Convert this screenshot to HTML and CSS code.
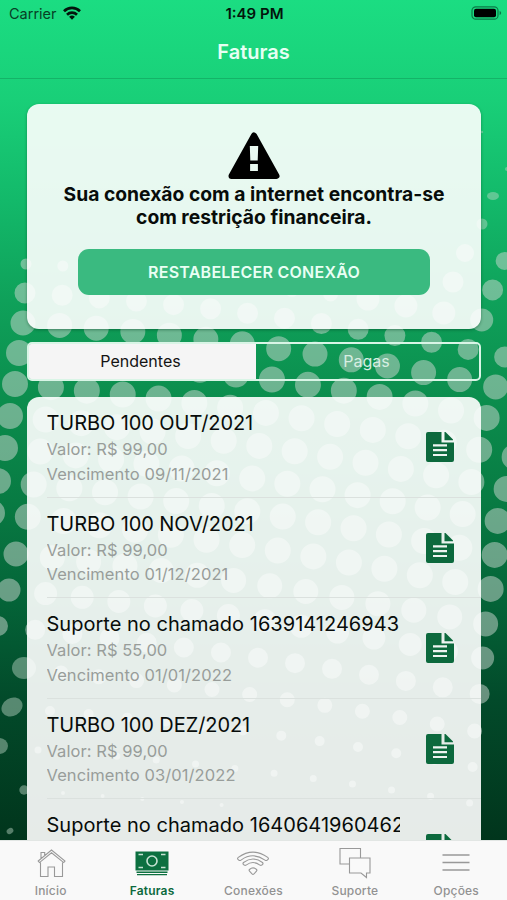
FILE: index.html
```html
<!DOCTYPE html>
<html lang="pt-BR">
<head>
<meta charset="utf-8">
<title>Faturas</title>
<link rel="stylesheet" href="styles.css">
</head>
<body>
<div class="phone">
  <!-- halftone backdrop: each row of dots is one zero-length dashed stroke -->
  <svg class="backdrop" viewBox="0 0 507 900" aria-hidden="true">
    <g class="dots">
      <path d="M453 282L493 290" pathLength="1.01" stroke-width="21"/>
      <path d="M465 253L505 261" pathLength="1.01" stroke-width="18"/>
      <path d="M26 264L100 268" pathLength="2.01" stroke-width="11"/>
      <path d="M137 271L331 294" pathLength="5.01" stroke-width="15"/>
      <path d="M368 299L520 327" pathLength="4.01" stroke-width="23"/>
      <path d="M25 293Q265 306 505 357" pathLength="13.01" stroke-width="21"/>
      <path d="M23 323Q259 337 496 387" pathLength="13.01" stroke-width="25"/>
      <path d="M19 353Q253 368 487 418" pathLength="13.01" stroke-width="26"/>
      <path d="M15 384Q265 405 515 457" pathLength="14.01" stroke-width="26"/>
      <path d="M10 416Q258 439 507 489" pathLength="14.01" stroke-width="26"/>
      <path d="M5 448Q251 472 498 521" pathLength="14.01" stroke-width="26"/>
      <path d="M-2 481Q246 504 495 555" pathLength="14.01" stroke-width="26"/>
      <path d="M-8 513Q242 539 491 589" pathLength="14.01" stroke-width="26"/>
      <path d="M16 554Q251 577 486 624" pathLength="13.01" stroke-width="25"/>
      <path d="M9 590Q246 612 483 658" pathLength="13.01" stroke-width="23"/>
      <path d="M-2 626Q239 650 480 694" pathLength="13.01" stroke-width="20"/>
      <path d="M61 673Q268 692 475 731" pathLength="11.01" stroke-width="15"/>
      <path d="M50 711Q262 727 473 767" pathLength="11.01" stroke-width="10"/>
      <path d="M38 750Q254 765 470 803" pathLength="11.01" stroke-width="7"/>
      <path d="M63 793L222 805" pathLength="4.01" stroke-width="4"/>
    </g>
    <g class="spots">
      <circle cx="482" cy="132" r="1.2"/><circle cx="507" cy="169" r="2"/>
      <ellipse cx="493" cy="196" rx="6" ry="4"/><circle cx="482" cy="224" r="5.5"/>
      <ellipse cx="24" cy="668" rx="12" ry="11"/>
      <ellipse cx="12" cy="707" rx="11" ry="9" transform="rotate(-30 12 707)"/>
      <ellipse cx="-1" cy="746" rx="9" ry="8"/><circle cx="24" cy="790" r="4.7"/>
      <ellipse cx="10" cy="831" rx="3.6" ry="2.8" transform="rotate(-35 10 831)"/>
    </g>
  </svg>

  <header class="topbar">
    <div class="status">
      <div class="carrier"><span>Carrier</span>
        <svg width="18" height="14" viewBox="0 0 18 14"><g fill="none" stroke="#03150c" stroke-width="2.7"><path d="M1 5.2a11.5 11.5 0 0 1 16 0"/><path d="M4 8.7a7.2 7.2 0 0 1 10 0"/></g><path d="M6.1 10.8a4.2 4.2 0 0 1 5.8 0L9 13.8z" fill="#03150c"/></svg>
      </div>
      <div class="clock">1:49 PM</div>
      <svg class="battery" width="31" height="14" viewBox="0 0 31 14"><rect x="1" y=".8" width="26" height="12.4" rx="3.8" fill="none" stroke="#0b7b48" stroke-width="1.2"/><rect x="3" y="2.8" width="22" height="8.4" rx="2" fill="#000"/><path d="M28.6 5v4q1.6-.7 1.6-2t-1.6-2" fill="#0b7b48"/></svg>
    </div>
    <h1>Faturas</h1>
  </header>

  <main>
    <section class="notice">
      <svg width="54" height="50" viewBox="0 0 54 50"><path d="M27 5.500L49.500 46H4.500z" fill="#000" stroke="#000" stroke-width="6" stroke-linejoin="round"/><path d="M22.800 16h8.400l-.5 14.500h-7.400zM23.100 34h7.800v7h-7.800z" fill="#e9f9f1"/></svg>
      <p>Sua conexão com a internet encontra-se<br>com restrição financeira.</p>
      <button>RESTABELECER CONEXÃO</button>
    </section>

    <nav class="segments"><span class="on">Pendentes</span><span>Pagas</span></nav>

    <svg class="defs" width="0" height="0"><symbol id="doc" viewBox="0 0 28 30"><path d="M2 0H15.500V10.500H28V28q0 2-2 2H2q-2 0-2-2V2Q0 0 2 0z" fill="#0c693d"/><path d="M18.500 0h1l7.500 7.500v.8h-8.500z" fill="#0c693d"/><path d="M7 13.300h14M7 18.200h14M7 23h14" stroke="#edf5f1" stroke-width="2.200"/></symbol></svg>

    <section class="list">
      <article><div class="info"><h2>TURBO 100 OUT/2021</h2><p>Valor: R$ 99,00</p><p class="due">Vencimento 09/11/2021</p></div><svg class="doc"><use href="#doc"/></svg></article>
      <article><div class="info"><h2>TURBO 100 NOV/2021</h2><p>Valor: R$ 99,00</p><p class="due">Vencimento 01/12/2021</p></div><svg class="doc"><use href="#doc"/></svg></article>
      <article><div class="info"><h2 class="support">Suporte no chamado 1639141246943</h2><p>Valor: R$ 55,00</p><p class="due">Vencimento 01/01/2022</p></div><svg class="doc"><use href="#doc"/></svg></article>
      <article><div class="info"><h2>TURBO 100 DEZ/2021</h2><p>Valor: R$ 99,00</p><p class="due">Vencimento 03/01/2022</p></div><svg class="doc"><use href="#doc"/></svg></article>
      <article><div class="info"><h2 class="support">Suporte no chamado 1640641960462</h2></div><svg class="doc"><use href="#doc"/></svg></article>
    </section>
  </main>

  <footer class="tabs">
    <a><svg width="36" height="34" viewBox="0 0 36 34"><path d="M8 11.500V5.500h3.700v3M5.200 14L18.500 3 32 14l-1.300 1.600L18.500 5.800 6.500 15.600zM7.500 15.500v14H15V20h6.500v9.500h8v-14"/></svg><span>Início</span></a>
    <a class="active"><svg width="36" height="34" viewBox="0 0 36 34"><path class="solid" d="M1.500 4.500h33v19h-33zM2.500 24.500h31v1.500h-31zM3 27h30v1.200H3z"/><g class="pale"><circle cx="18" cy="14" r="5"/><path d="M4.500 7.500h4.500M27 7.500h4.500M4.500 20.500h4.500M27 20.500h4.500"/></g></svg><span>Faturas</span></a>
    <a><svg width="36" height="34" viewBox="0 0 36 34"><path d="M3 12.400q-1-1 .3-2Q18-.2 32.700 10.400q1.300 1 .3 2l-1 .8q-1 .7-2-.1Q18 4.500 6 13.100q-1 .8-2 .1zM8.500 17.500q-1-1 0-2Q18 8.500 27.500 15.500q1 1 0 2l-.8.6q-.8.6-1.800 0Q18 13 11.100 18.100q-1 .6-1.800 0zM14.500 22.500q3.500-3.300 7 0 .8.8 0 1.700l-2.500 2.700q-1 .9-2 0l-2.500-2.700q-.8-.9 0-1.700z"/></svg><span>Conexões</span></a>
    <a><svg width="36" height="34" viewBox="0 0 36 34"><path d="M12.500 17H3V1.500h20.500V11M12.500 11H33v15h-3.500v4.500L24 26H12.500z"/></svg><span>Suporte</span></a>
    <a><svg width="36" height="34" viewBox="0 0 36 34"><path stroke-width="1.500" d="M4.500 8h27M4.500 15.500h27M4.500 23h27"/></svg><span>Opções</span></a>
  </footer>
</div>
</body>
</html>
```

FILE: styles.css
```css
* { box-sizing: border-box; }
body { margin: 0; font-family: Inter, "Liberation Sans", sans-serif; color: #080c0a; }
h1, h2, p { margin: 0; }
.phone {
  position: relative; width: 507px; height: 900px; overflow: hidden;
  display: flex; flex-direction: column;
  background: linear-gradient(#1bdd82 0, #19cf78 100px, #13b96a 200px, #0fa15a 300px, #0b8d4d 400px, #087b43 500px, #046438 600px, #024a2a 700px, #01351c 840px);
}
.backdrop { position: absolute; left: 0; top: 0; width: 507px; height: 900px; }
.dots path { fill: none; stroke: rgba(205, 215, 209, .5); stroke-linecap: round; stroke-dasharray: 0 1; }
.spots { fill: rgba(190, 215, 200, .45); }
.topbar { position: relative; height: 79px; border-bottom: 1px solid #14b368; }
.status { height: 28px; display: grid; grid-template-columns: 1fr auto 1fr; align-items: center; padding: 0 5px 0 9px; }
.carrier { display: flex; align-items: center; gap: 6px; font-size: 14.5px; color: #074025; }
.carrier span { margin-top: -1px; }
.carrier svg { margin-top: -3px; }
.clock { margin: -1px 2px 0 0; font-size: 15px; font-weight: 600; color: #03150c; }
.battery { justify-self: end; margin-top: -2px; }
h1 { margin-top: 11px; text-align: center; font-size: 20px; line-height: 26px; font-weight: 600; color: #e7fff3; }
main { position: relative; flex: 1; min-height: 0; overflow: hidden; padding: 25px 26px 0 27px; display: flex; flex-direction: column; }
.notice {
  flex: none; height: 225px; border-radius: 12px; padding-top: 26px;
  background: rgba(255, 255, 255, .9); box-shadow: 0 1px 3px rgba(0, 60, 30, .45);
  display: flex; flex-direction: column; align-items: center;
}
.notice > svg { flex: none; }
.notice p { margin-top: 3px; text-align: center; font-size: 19.3px; line-height: 23px; font-weight: 700; white-space: nowrap; }
.notice button {
  margin-top: 20px; width: 352px; height: 46px; border: 0; border-radius: 11px;
  background: #3aba80; color: #e9fff4; font: 600 16px Inter, sans-serif; letter-spacing: .25px;
}
.segments {
  flex: none; height: 39px; margin-top: 13px; display: grid; grid-template-columns: 1fr 1fr;
  border: 2px solid #d9f5e6; border-radius: 5px; overflow: hidden; font-size: 16px; line-height: 34px; text-align: center; color: #d8eee2;
}
.segments .on { background: #f5f5f5; color: #131313; box-shadow: 0 0 0 2px #f5f5f5; padding-right: 2px; }
.list { flex: none; margin-top: 16px; border-radius: 12px; background: rgba(255, 255, 255, .9); overflow: hidden; }
article { height: 100.5px; padding: 12px 27px 0 19.5px; display: flex; justify-content: space-between; background: linear-gradient(#dbe1de, #dbe1de) 20px 100% / 100% 1px no-repeat; }
.info { width: 353px; overflow: hidden; white-space: nowrap; }
h2 { font-size: 20px; line-height: 28px; font-weight: 400; letter-spacing: -.08px; }
h2.support { letter-spacing: .02px; }
.info p { font-size: 16.5px; line-height: 24.5px; color: #989d9a; letter-spacing: .06px; }
.info .due { letter-spacing: .09px; }
.doc { width: 28px; height: 30px; margin-top: 23px; flex: none; }
.defs { position: absolute; }
.tabs { position: relative; height: 60px; background: #f9f9f9; border-top: 1px solid #e2e6e4; display: grid; grid-template-columns: repeat(5, 1fr); }
.tabs a { display: flex; flex-direction: column; align-items: center; padding-top: 6px; font-size: 12px; line-height: 15px; font-weight: 500; letter-spacing: .2px; color: #929292; }
.tabs svg { fill: none; stroke: #999; stroke-width: 1.1; }
.tabs span { margin-top: 2px; }
.tabs .active { color: #0c693d; font-weight: 600; }
.solid { fill: #0c7040; stroke: none; }
.pale { stroke: #c6e2d3; stroke-width: 1.6; }
```
